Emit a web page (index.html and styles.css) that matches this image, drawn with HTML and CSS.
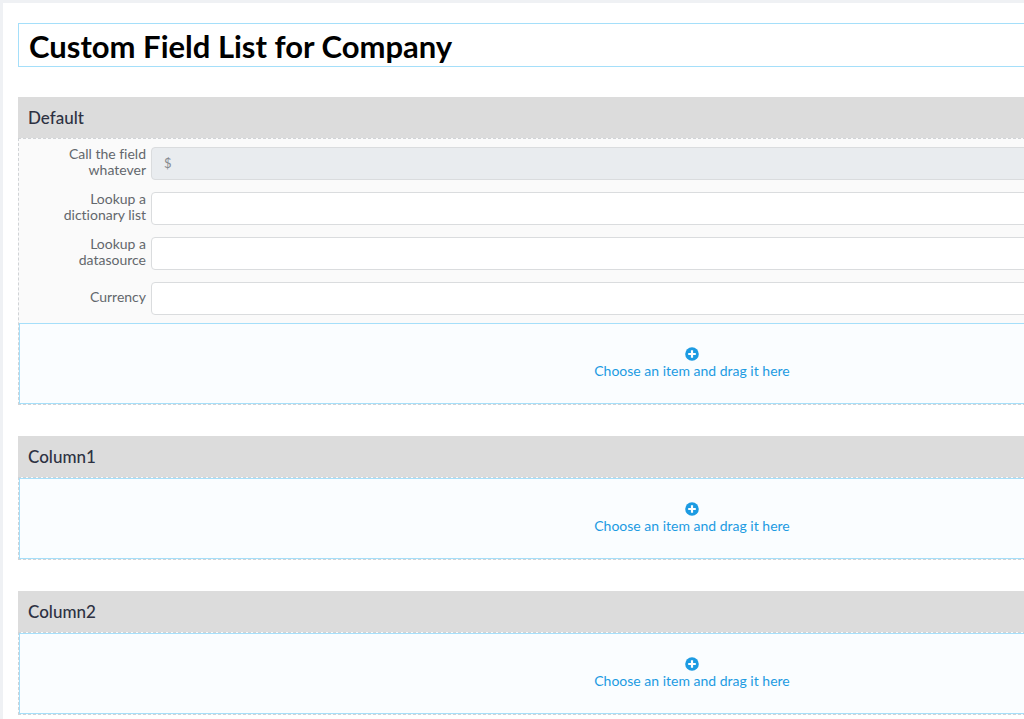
FILE: index.html
```html
<!DOCTYPE html>
<html lang="en">
<head>
    <meta charset="UTF-8">
    <meta name="viewport" content="width=device-width, initial-scale=1.0">
    <title>Custom Field List for Company</title>
    <link rel="stylesheet" href="styles.css">
</head>
<body>
    <svg class="sprite" aria-hidden="true">
        <symbol id="plus" viewBox="0 0 14 14">
            <circle cx="7" cy="7" r="6.8" fill="currentColor"/>
            <path d="M7 3.2v7.6M3.2 7h7.6" stroke="#fff" stroke-width="2.2" fill="none"/>
        </symbol>
    </svg>

    <main class="page">
        <div class="form">
            <h1 class="title">Custom Field List for Company</h1>

            <section class="group">
                <h2 class="group_title">Default</h2>
                <div class="group_body">
                    <div class="fields">
                        <div class="field">
                            <label for="whatever">Call the field whatever</label>
                            <input type="text" id="whatever" value="$" disabled>
                        </div>
                        <div class="field">
                            <label for="dictionary">Lookup a dictionary list</label>
                            <input type="text" id="dictionary">
                        </div>
                        <div class="field">
                            <label for="datasource">Lookup a datasource</label>
                            <input type="text" id="datasource">
                        </div>
                        <div class="field">
                            <label for="currency">Currency</label>
                            <input type="text" id="currency">
                        </div>
                    </div>
                    <div class="dropzone">
                        <svg class="plus"><use href="#plus"/></svg>
                        <span>Choose an item and drag it here</span>
                    </div>
                </div>
            </section>

            <section class="group">
                <h2 class="group_title">Column1</h2>
                <div class="group_body">
                    <div class="dropzone">
                        <svg class="plus"><use href="#plus"/></svg>
                        <span>Choose an item and drag it here</span>
                    </div>
                </div>
            </section>

            <section class="group">
                <h2 class="group_title">Column2</h2>
                <div class="group_body">
                    <div class="dropzone">
                        <svg class="plus"><use href="#plus"/></svg>
                        <span>Choose an item and drag it here</span>
                    </div>
                </div>
            </section>
        </div>
    </main>
</body>
</html>
```
FILE: styles.css
```css
*{
    box-sizing: border-box;
}

body{
    margin: 0;
    padding: 3px 0 0 3px;
    background-color: #eff1f4;
    font-family: Lato, "Liberation Sans", sans-serif;
    font-size: 14px;
    font-variant-ligatures: none;
}

.sprite{
    display: none;
}

.page{
    min-height: calc(100vh - 3px);
    padding: 20px 0 0 15px;
    background-color: #fff;
    overflow: hidden;
}

.form{
    min-width: 1348px;
}

.title{
    margin: 0 0 30px;
    padding: 4px 10px 2px;
    border: 1px solid #a5dffa;
    color: #000;
    font-size: 31px;
    font-weight: 700;
    line-height: 36px;
}

.group{
    margin-bottom: 31px;
}

.group:last-child{
    margin-bottom: 0;
}

.group_title{
    margin: 0;
    padding: 0 10px;
    background-color: #dcdcdc;
    color: #2d3142;
    font-size: 17px;
    font-weight: 500;
    line-height: 41px;
}

.group_body{
    border: 1px dashed #d0d3d6;
    background-color: #fafafa;
}

.fields{
    padding: 2px 0;
}

.field{
    display: flex;
    align-items: center;
    height: 45px;
    padding: 0 8px 0 31px;
}

.field label{
    width: 96px;
    margin-right: 5px;
    padding-bottom: 3px;
    color: #63676c;
    line-height: 16px;
    text-align: right;
}

.field input{
    flex: 1;
    height: 33px;
    padding: 0 12px 2px;
    border: 1px solid #dadcde;
    border-radius: 4px;
    background-color: #fff;
    color: #868b90;
    font-family: inherit;
    font-size: 13px;
}

.field input:disabled{
    background-color: #e9ecef;
}

.dropzone{
    display: flex;
    flex-direction: column;
    align-items: center;
    justify-content: center;
    height: 81px;
    border: 1px solid #a5dffa;
    background-color: #fafdff;
    color: #1c9be2;
    line-height: 20px;
}

.plus{
    width: 14px;
    height: 14px;
}
```
